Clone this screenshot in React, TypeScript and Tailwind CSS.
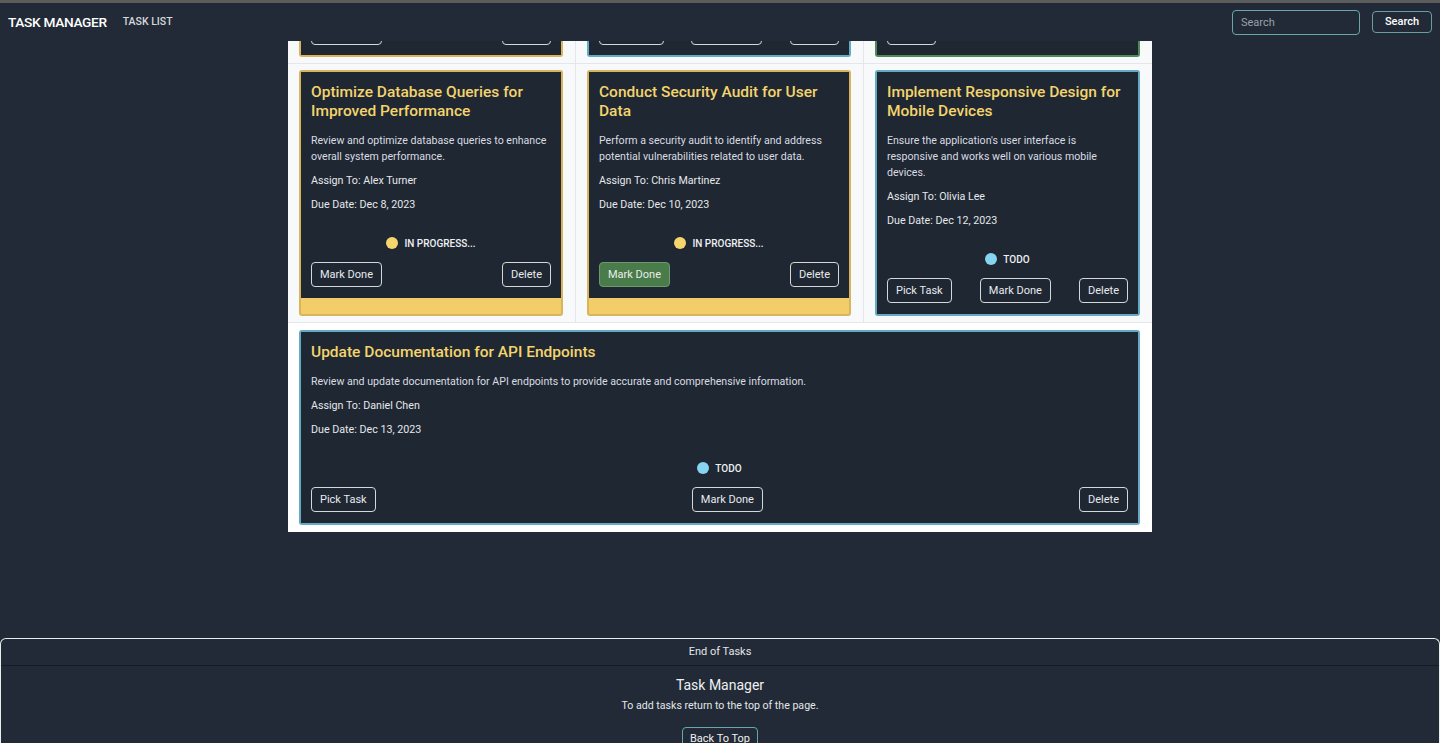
import React from "react";

type Status = "progress" | "todo" | "done";

interface Task {
  title: string;
  desc: string;
  assign: string;
  due: string;
  status: Status;
  activeDone?: boolean;
}

const ROW: Task[] = [
  {
    title: "Optimize Database Queries for Improved Performance",
    desc: "Review and optimize database queries to enhance overall system performance.",
    assign: "Alex Turner",
    due: "Dec 8, 2023",
    status: "progress",
  },
  {
    title: "Conduct Security Audit for User Data",
    desc: "Perform a security audit to identify and address potential vulnerabilities related to user data.",
    assign: "Chris Martinez",
    due: "Dec 10, 2023",
    status: "progress",
    activeDone: true,
  },
  {
    title: "Implement Responsive Design for Mobile Devices",
    desc: "Ensure the application's user interface is responsive and works well on various mobile devices.",
    assign: "Olivia Lee",
    due: "Dec 12, 2023",
    status: "todo",
  },
];

const LAST: Task = {
  title: "Update Documentation for API Endpoints",
  desc: "Review and update documentation for API endpoints to provide accurate and comprehensive information.",
  assign: "Daniel Chen",
  due: "Dec 13, 2023",
  status: "todo",
};

const font = { fontFamily: "Roboto, 'Liberation Sans', sans-serif" };

function Btn({ children, green }: { children: React.ReactNode; green?: boolean }) {
  return (
    <button
      className={`h-[25px] px-2 rounded-[4px] border text-[11px] leading-none ${
        green
          ? "bg-[#4a7b4b] border-[#6b9a6b] text-[#e6efe6]"
          : "bg-transparent border-[#d4d8dd] text-[#e8eaed]"
      }`}
    >
      {children}
    </button>
  );
}

function Buttons({ task }: { task: Task }) {
  return (
    <div className="flex justify-between items-center h-[25px]">
      {task.status === "todo" && <Btn>Pick Task</Btn>}
      {task.status !== "done" && <Btn green={task.activeDone}>Mark Done</Btn>}
      <Btn>Delete</Btn>
    </div>
  );
}

function Card({ task }: { task: Task }) {
  const wrap =
    task.status === "progress"
      ? "border-[#d8b45d] bg-gradient-to-b from-[#e6bd57] to-[#f2cd69]"
      : "border-[#64aac4] bg-[#1f2733]";
  return (
    <div className={`h-full border-2 rounded-[3px] ${wrap}`}>
      <div className="bg-[#1f2733] px-[10px] pt-[11px] pb-[11px]">
        <h3 className="text-[15.5px] leading-[19px] font-medium text-[#f4d46c] mb-3">{task.title}</h3>
        <p className="text-[10.6px] leading-4 text-[#d9dce1] mb-2">{task.desc}</p>
        <p className="text-[10.7px] leading-4 text-[#e6e8eb] mb-2">Assign To: {task.assign}</p>
        <p className="text-[10.7px] leading-4 text-[#e6e8eb] mb-[22px]">Due Date: {task.due}</p>
        <div className="flex items-center justify-center gap-[6px] h-4 mb-[11px]">
          <span
            className={`w-3 h-3 rounded-full ${
              task.status === "progress" ? "bg-[#f5d56c]" : "bg-[#86d3f2]"
            }`}
          />
          <span className="text-[10px] font-medium text-[#eef0f2]">
            {task.status === "progress" ? "IN PROGRESS..." : "TODO"}
          </span>
        </div>
        <Buttons task={task} />
      </div>
    </div>
  );
}

function Fragment({ border, task }: { border: string; task: Task }) {
  return (
    <div className={`border-2 border-t-0 rounded-b-[3px] ${border}`}>
      <div className="bg-[#1f2733] h-[14px] overflow-hidden flex items-end px-[10px] pb-[10px]">
        <div className="w-full">
          <Buttons task={task} />
        </div>
      </div>
    </div>
  );
}

export default function App() {
  const cell = "pl-[11px] pr-3 py-[6px] border-b border-[#e4e6e9]";
  return (
    <div className="min-h-screen bg-[#212a36] overflow-hidden" style={font}>
      <div className="h-[3px] bg-[#5c5c5c]" />
      {/* Navbar */}
      <nav className="h-[38px] flex items-center px-2">
        <span className="text-[13.7px] font-medium text-white tracking-tight">TASK MANAGER</span>
        <span className="ml-4 text-[10.5px] font-medium text-[#d4d7dc]">TASK LIST</span>
        <div className="ml-auto flex items-center gap-3">
          <input
            placeholder="Search"
            className="w-[128px] h-[25px] rounded-[4px] border border-[#6aa7aa] bg-transparent px-2 text-[11px] text-white placeholder:text-[#9aa1aa] outline-none"
          />
          <button className="w-[60px] h-[22px] rounded-[4px] border border-[#6a9da2] text-[11px] font-medium text-white">
            Search
          </button>
        </div>
      </nav>

      {/* Task grid */}
      <div className="w-[864px] mx-auto bg-[#f8f9fa] rounded-b-[3px] grid grid-cols-3">
        <div className={`${cell} pt-0 border-r`}>
          <Fragment border="border-[#d8b45d]" task={ROW[0]} />
        </div>
        <div className={`${cell} pt-0 border-r`}>
          <Fragment border="border-[#64aac4]" task={ROW[2]} />
        </div>
        <div className={`${cell} pt-0`}>
          <div className="border-2 border-t-0 rounded-b-[3px] border-[#4f8a59]">
            <div className="bg-[#1f2733] h-[14px] overflow-hidden flex items-end px-[10px] pb-[10px]">
              <div className="flex h-[25px]">
                <Btn>Delete</Btn>
              </div>
            </div>
          </div>
        </div>
        {ROW.map((t, i) => (
          <div key={t.title} className={`${cell} ${i < 2 ? "border-r" : ""}`}>
            <Card task={t} />
          </div>
        ))}
        <div className="col-span-3 pl-[11px] pr-3 pt-[7px] pb-[7px] bg-white">
          <Card task={LAST} />
        </div>
      </div>

      {/* Footer */}
      <footer className="mt-[106px] border border-b-0 border-[#e9ecef] rounded-t-[6px] bg-[#212a36] text-center">
        <div className="h-[27px] flex items-center justify-center border-b border-[#151b24] text-[11px] text-[#e4e6e9]">
          End of Tasks
        </div>
        <div className="pt-[9px] pb-5">
          <h5 className="text-[14px] leading-5 font-normal text-[#eef0f2]">Task Manager</h5>
          <p className="mt-1 text-[10.6px] leading-[14px] text-[#e4e6e9]">To add tasks return to the top of the page.</p>
          <button className="mt-[14px] w-[76px] h-[25px] rounded-[4px] border border-[#6aa7aa] text-[11px] text-[#eef0f2]">
            Back To Top
          </button>
        </div>
      </footer>
    </div>
  );
}
